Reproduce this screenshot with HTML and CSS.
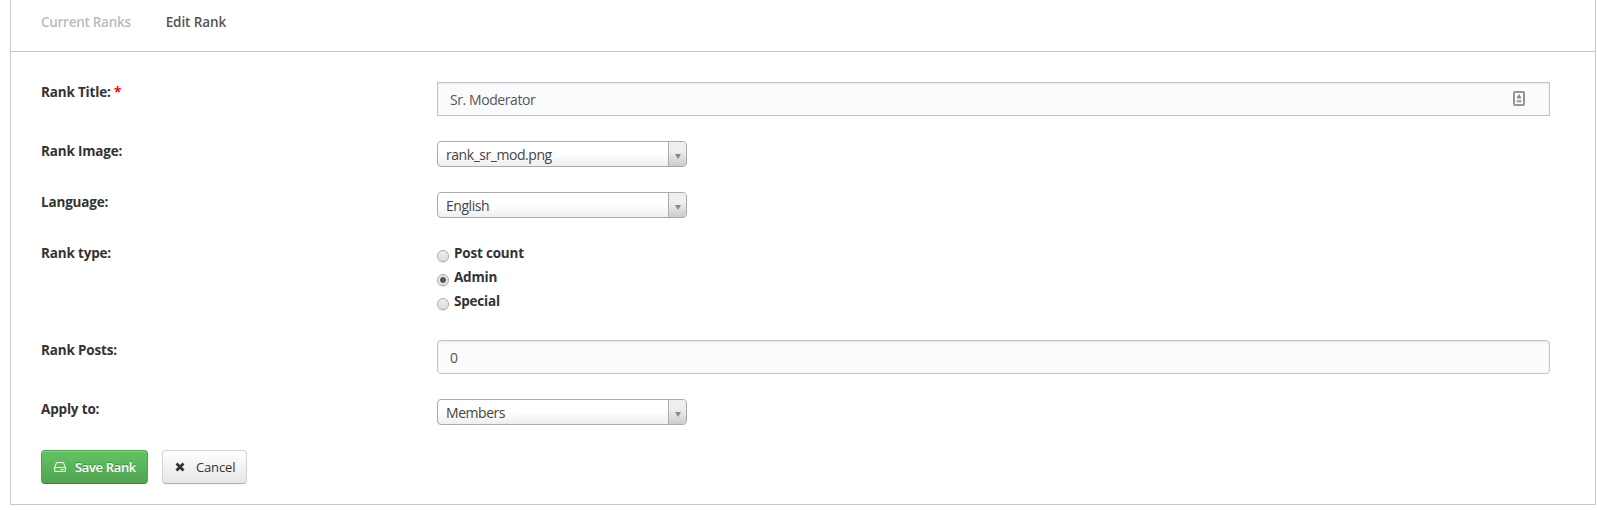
FILE: index.html
```
<!DOCTYPE html>
<html lang="en">
<head>
    <meta charset="UTF-8">
    <title>Edit Rank</title>
    <link rel="stylesheet" href="styles.css">
</head>
<body>
    <div class="box">
        <div class="tabs">
            <a class="tab">Current Ranks</a>
            <a class="tab active">Edit Rank</a>
        </div>
        <form class="rank-form">
            <div class="row">
                <label class="name"><span>Rank Title:</span> <span class="required">*</span></label>
                <div class="input-wrap">
                    <input class="text square" type="text" value="Sr. Moderator">
                    <svg class="autofill" width="12" height="15" viewBox="0 0 12 15">
                        <rect x="1" y="1" width="10" height="13" rx="1" fill="#fff" stroke="#959595" stroke-width="2"/>
                        <path d="M6 3l2 3v1.5H4V6z" fill="#888"/>
                        <path d="M3.5 9h5v2.5h-5z" fill="#aaa"/>
                    </svg>
                </div>
            </div>
            <div class="row">
                <label class="name"><span>Rank Image:</span></label>
                <div class="select"><span class="value">rank_sr_mod.png</span><span class="arrow"></span></div>
            </div>
            <div class="row">
                <label class="name"><span>Language:</span></label>
                <div class="select"><span class="value">English</span><span class="arrow"></span></div>
            </div>
            <div class="row types">
                <label class="name"><span>Rank type:</span></label>
                <div>
                    <label class="option"><input type="radio" name="type"><span>Post count</span></label>
                    <label class="option"><input type="radio" name="type" checked><span>Admin</span></label>
                    <label class="option"><input type="radio" name="type"><span>Special</span></label>
                </div>
            </div>
            <div class="row">
                <label class="name"><span>Rank Posts:</span></label>
                <div class="input-wrap">
                    <input class="text" type="text" value="0">
                </div>
            </div>
            <div class="row">
                <label class="name"><span>Apply to:</span></label>
                <div class="select"><span class="value">Members</span><span class="arrow"></span></div>
            </div>
            <div class="buttons">
                <button class="btn save" type="button">
                    <svg width="12" height="10" viewBox="0 0 12 10" fill="none" stroke="#fff">
                        <path d="M.7 5.5L2.5.6h7l1.8 4.9v3.9H.7zM.7 5.5h10.6"/>
                        <path d="M6.5 7.5h3.2"/>
                    </svg>
                    <span>Save Rank</span>
                </button>
                <button class="btn cancel" type="button">
                    <svg width="10" height="10" viewBox="0 0 10 10">
                        <path d="M1.5 1.5l7 7M8.5 1.5l-7 7" stroke="#333" stroke-width="2.8"/>
                    </svg>
                    <span>Cancel</span>
                </button>
            </div>
        </form>
    </div>
</body>
</html>
```
FILE: styles.css
```
*{
    box-sizing: border-box;
}
body{
    margin: 0;
    background: #fff;
    color: #333;
    font: 14px/20px "Open Sans", sans-serif;
}
.box{
    width: 1586px;
    height: 505px;
    margin-left: 10px;
    border: 1px solid #c8c8c8;
    border-top: 0;
}
.tabs{
    display: flex;
    gap: 35px;
    height: 52px;
    padding: 12px 30px 0;
    border-bottom: 1px solid #c8c8c8;
}
.tab{
    font-size: 13.5px;
    font-weight: 600;
    letter-spacing: -.28px;
    color: #bbb;
}
.active{
    color: #555;
    letter-spacing: -.1px;
}
.rank-form{
    display: flex;
    flex-direction: column;
    gap: 25px;
    padding: 30px 45px 0 30px;
}
.row{
    display: flex;
}
.types{
    height: 72px;
}
.name{
    width: 396px;
    height: 20px;
    font-size: 13.5px;
    font-weight: bold;
    letter-spacing: -.17px;
}
.required{
    color: #f00;
}
.input-wrap{
    position: relative;
    flex: 1;
}
.text{
    display: block;
    width: 100%;
    height: 34px;
    padding: 1px 12px 0;
    border: 1px solid #c4c4c4;
    border-radius: 4px;
    background: #fafbfd;
    box-shadow: inset 0 1px 2px rgba(0,0,0,.08);
    color: #555;
    font: 14px "Open Sans", sans-serif;
    letter-spacing: -.42px;
}
.square{
    border-radius: 0;
}
.autofill{
    position: absolute;
    top: 9px;
    right: 25px;
}
.select{
    display: flex;
    width: 250px;
    height: 26px;
    border: 1px solid #aaa;
    border-radius: 4px;
    background: linear-gradient(#fff 50%, #eee);
    overflow: hidden;
    color: #444;
    letter-spacing: -.45px;
}
.value{
    flex: 1;
    padding: 3px 0 0 8px;
}
.arrow{
    display: flex;
    align-items: center;
    justify-content: center;
    width: 18px;
    padding-top: 4px;
    border-left: 1px solid #aaa;
    background: linear-gradient(#eee 40%, #ccc);
}
.arrow::after{
    content: "";
    border: 3.5px solid transparent;
    border-top: 5px solid #888;
    border-bottom: 0;
}
.option{
    display: flex;
    height: 24px;
    font-size: 13.5px;
    font-weight: bold;
    letter-spacing: -.2px;
}
.option input{
    appearance: none;
    width: 12px;
    height: 12px;
    margin: 7px 5px 0 0;
    border: 1px solid #aaa;
    border-radius: 50%;
    background: linear-gradient(#eee, #ddd);
    box-shadow: 0 1px 1px rgba(0,0,0,.1);
}
.option input:checked{
    background: radial-gradient(circle, #555 0 2.5px, #e6e6e6 3.3px);
}
.buttons{
    display: flex;
    gap: 14px;
}
.btn{
    display: flex;
    align-items: center;
    height: 34px;
    padding: 0 12px;
    border: 1px solid #d4d4d4;
    border-bottom-color: #b3b3b3;
    border-radius: 4px;
    background: linear-gradient(#fff, #e6e6e6);
    box-shadow: 0 1px 2px rgba(0,0,0,.06);
    color: #333;
    font: 13px/20px "Open Sans", sans-serif;
    white-space: nowrap;
}
.btn svg{
    flex-shrink: 0;
}
.save{
    width: 107px;
    gap: 9px;
    border-color: #51a351;
    border-bottom-color: #408140;
    background: linear-gradient(#62c462, #51a351);
    box-shadow: inset 0 1px 0 rgba(255,255,255,.2);
    color: #fff;
    font-weight: 600;
    letter-spacing: -.35px;
    text-shadow: 0 -1px 0 rgba(0,0,0,.25);
}
.cancel{
    width: 85px;
    gap: 11px;
    letter-spacing: -.15px;
}
```
